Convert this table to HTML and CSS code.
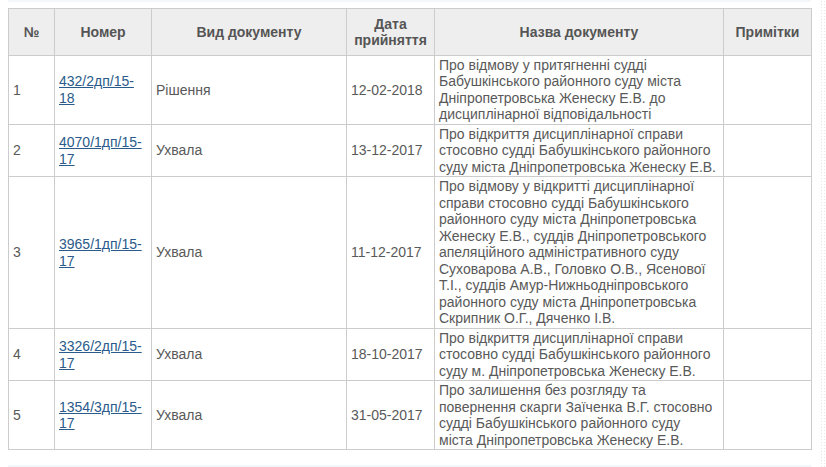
FILE: index.html
```html
<!DOCTYPE html>
<html lang="uk">
<head>
<meta charset="utf-8">
<link rel="stylesheet" href="styles.css">
</head>
<body>
<div class="page">
  <div class="main">
    <div class="strip strip-top"></div>
    <table class="docs">
      <colgroup>
        <col class="c-num"><col class="c-id"><col class="c-type"><col class="c-date"><col class="c-name"><col class="c-note">
      </colgroup>
      <thead>
        <tr>
          <th>№</th>
          <th>Номер</th>
          <th>Вид документу</th>
          <th>Дата<br>прийняття</th>
          <th>Назва документу</th>
          <th>Примітки</th>
        </tr>
      </thead>
      <tbody>
        <tr>
          <td>1</td>
          <td><a href="#">432/2дп/15-18</a></td>
          <td>Рішення</td>
          <td>12-02-2018</td>
          <td class="name">Про відмову у притягненні судді Бабушкінського районного суду міста Дніпропетровська Женеску Е.В. до дисциплінарної відповідальності</td>
          <td></td>
        </tr>
        <tr>
          <td>2</td>
          <td><a href="#">4070/1дп/15-17</a></td>
          <td>Ухвала</td>
          <td>13-12-2017</td>
          <td class="name">Про відкриття дисциплінарної справи стосовно судді Бабушкінського районного суду міста Дніпропетровська Женеску Е.В.</td>
          <td></td>
        </tr>
        <tr>
          <td>3</td>
          <td><a href="#">3965/1дп/15-17</a></td>
          <td>Ухвала</td>
          <td>11-12-2017</td>
          <td class="name">Про відмову у відкритті дисциплінарної справи стосовно судді Бабушкінського районного суду міста Дніпропетровська Женеску Е.В., суддів Дніпропетровського апеляційного адміністративного суду Суховарова А.В., Головко О.В., Ясенової Т.І., суддів Амур-Нижньодніпровського районного суду міста Дніпропетровська Скрипник О.Г., Дяченко І.В.</td>
          <td></td>
        </tr>
        <tr>
          <td>4</td>
          <td><a href="#">3326/2дп/15-17</a></td>
          <td>Ухвала</td>
          <td>18-10-2017</td>
          <td class="name">Про відкриття дисциплінарної справи стосовно судді Бабушкінського районного суду м. Дніпропетровська Женеску Е.В.</td>
          <td></td>
        </tr>
        <tr>
          <td>5</td>
          <td><a href="#">1354/3дп/15-17</a></td>
          <td>Ухвала</td>
          <td>31-05-2017</td>
          <td class="name">Про залишення без розгляду та повернення скарги Заїченка В.Г. стосовно судді Бабушкінського районного суду міста Дніпропетровська Женеску Е.В.</td>
          <td></td>
        </tr>
      </tbody>
    </table>
    <div class="strip strip-bottom"></div>
  </div>
  <div class="side"></div>
</div>
</body>
</html>
```
FILE: styles.css
```css
html, body {
  margin: 0;
  padding: 0;
  background: #ffffff;
}
body {
  font-family: "Liberation Sans", Arial, sans-serif;
  font-size: 14px;
  color: #595959;
}
.page {
  display: flex;
  width: 826px;
  height: 467px;
  overflow: hidden;
}
.main {
  width: 803px;
  padding-left: 8px;
  display: flex;
  flex-direction: column;
}
.side {
  margin-left: 9px;
  width: 6px;
  background-image: radial-gradient(circle, #e6e6e6 0.8px, transparent 1px);
  background-size: 3px 3px;
}
.strip {
  height: 3px;
  background: #f3f7f9;
}
.strip-top {
  margin-bottom: 6px;
}
.strip-bottom {
  margin-top: 15px;
}
.docs {
  border-collapse: collapse;
  table-layout: fixed;
  width: 803px;
}
.c-num { width: 46px; }
.c-id { width: 97px; }
.c-type { width: 195px; }
.c-date { width: 88px; }
.c-name { width: 289px; }
.c-note { width: 88px; }
.docs th, .docs td {
  border: 1px solid #cccccc;
  line-height: 16.5px;
}
.docs th {
  background: #eeeeee;
  font-weight: bold;
  color: #555555;
  text-align: center;
  padding: 7px 4px 6px;
}
.docs td {
  padding: 1px 4px;
  vertical-align: middle;
  text-align: left;
}
.docs td.name {
  padding-right: 6px;
}
.docs a {
  color: #2a5b8a;
  text-decoration: underline;
}
```
